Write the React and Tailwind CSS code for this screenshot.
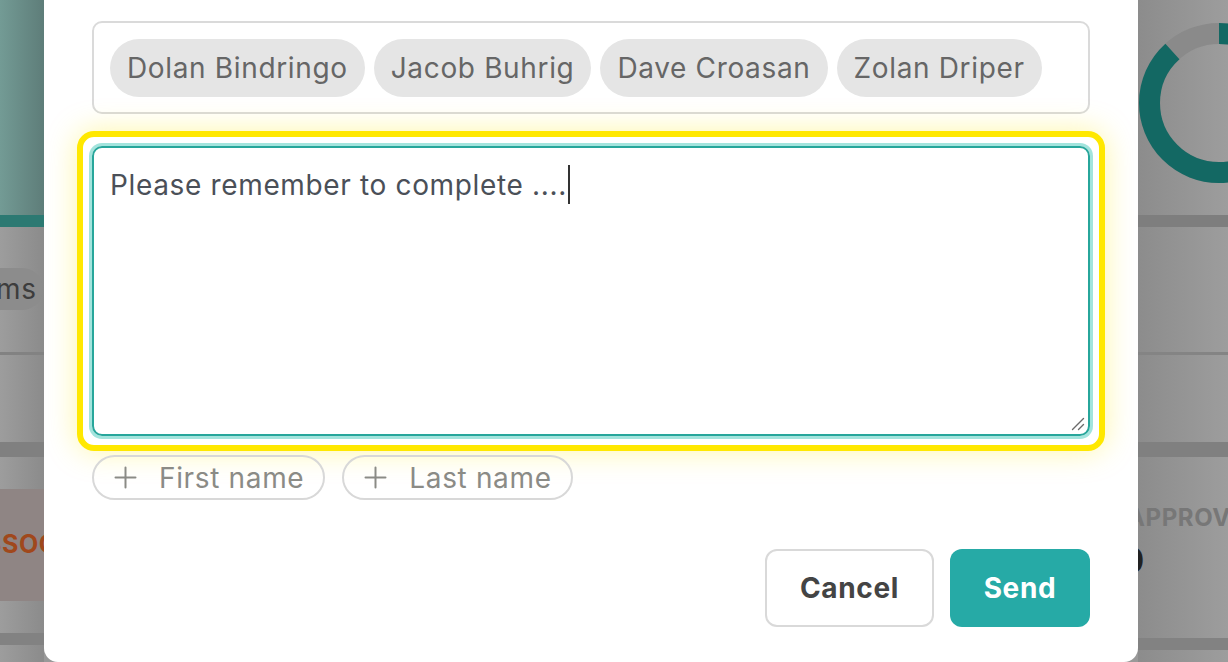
const recipients = ['Dolan Bindringo', 'Jacob Buhrig', 'Dave Croasan', 'Zolan Driper'];

// plus icon for the "add field" pills
const PlusIcon = () => (
    <svg width="23" height="23" viewBox="0 0 23 23" fill="none" stroke="#8b8b86" strokeWidth="2" strokeLinecap="round">
        <path d="M1.5 11.5h20M11.5 1.5v20" />
    </svg>
);

export default function App() {
    return (
        <div className="flex h-[662px] w-[1228px] overflow-hidden bg-[#999999] font-['Inter',sans-serif] tracking-[0.65px]">
            {/* --- dimmed dashboard, left edge --- */}
            <div className="flex w-[44px] shrink-0 flex-col overflow-hidden">
                <div className="h-[215px] bg-gradient-to-r from-[#739b95] to-[#5e7d79]" />
                <div className="h-[12px] bg-[#2c7972]" />
                <div className="flex flex-1 flex-col bg-gradient-to-r from-[#9d9d9d] to-[#8b8b8b]">
                    <div className="mt-[41px] flex h-[42px] w-[43px] items-center rounded-r-full bg-[#8c8c8c] text-[28px] text-[#3d3d3d]">
                        <span className="-ml-[4px]">ms</span>
                    </div>
                    <div className="mt-[42px] h-[3px] bg-[#828282]" />
                    <div className="mt-[87px] h-[15px] bg-[#808080]" />
                    <div className="mt-[32px] flex h-[112px] items-center bg-[#8f8584]">
                        <span className="-ml-[34px] whitespace-nowrap text-[25px] font-bold tracking-wide text-[#a0481c]">ASSOCIATES</span>
                    </div>
                    <div className="mt-[32px] h-[12px] bg-[#828282]" />
                </div>
            </div>

            {/* --- modal --- */}
            <div className="relative z-10 flex w-[1094px] shrink-0 flex-col rounded-b-[14px] bg-white px-[48px] pt-[21px] pb-[35px]">
                <div className="flex h-[93px] items-center gap-[9px] rounded-[10px] border-2 border-[#dadada] px-[16px]">
                    {recipients.map((name) => (
                        <span key={name} className="flex h-[58px] items-center rounded-full bg-[#e5e5e5] px-[17px] text-[28px] text-[#666666]">
                            {name}
                        </span>
                    ))}
                </div>

                <div className="-mx-[15px] mt-[17px] rounded-[17px] border-[6px] border-[#ffe800] p-[9px] shadow-[0_0_30px_rgba(255,232,0,0.35)]">
                    {/* message field, focused with caret at the end */}
                    <div
                        role="textbox"
                        aria-multiline="true"
                        className="relative h-[290px] w-full rounded-[10px] border-2 border-[#27a69b] px-[16px] pt-[17px] text-[28px] leading-[40px] text-[#4b5058] ring-[3px] ring-[#a3e4dd]"
                    >
                        <span>Please remember to complete ....</span>
                        <span className="ml-[1px] inline-block h-[39px] w-[2px] align-top bg-[#333333]" />
                        <svg width="14" height="14" viewBox="0 0 14 14" className="absolute right-[3px] bottom-[3px]" stroke="#6b6b6b" strokeWidth="1.4" strokeLinecap="round">
                            <path d="M1.5 12.5 12.5 1.5M7.5 12.5l5-5" />
                        </svg>
                    </div>
                </div>

                <div className="mt-[4px] flex gap-[17px]">
                    {['First name', 'Last name'].map((label) => (
                        <button key={label} type="button" className="flex h-[45px] items-center gap-[22px] rounded-full border-2 border-[#d8d8d8] pl-[20px] pr-[19px] text-[28px] text-[#8b8b86]">
                            <PlusIcon />
                            {label}
                        </button>
                    ))}
                </div>

                <div className="mt-[49px] flex justify-end gap-[16px]">
                    <button type="button" className="h-[78px] w-[169px] rounded-[12px] border-2 border-[#d9d9d9] text-[28px] font-bold text-[#444444]">
                        Cancel
                    </button>
                    <button type="button" className="h-[78px] w-[140px] rounded-[12px] bg-[#26aaa6] text-[28px] font-bold text-white">
                        Send
                    </button>
                </div>
            </div>

            {/* --- dimmed dashboard, right edge --- */}
            <div className="flex flex-1 flex-col bg-gradient-to-r from-[#8c8c8c] to-[#a4a4a4]">
                <svg width="90" height="215" viewBox="0 0 90 215" className="shrink-0">
                    <circle cx="81" cy="103" r="69.5" fill="none" stroke="#8a8a8a" strokeWidth="21" />
                    <circle
                        cx="81"
                        cy="103"
                        r="69.5"
                        fill="none"
                        stroke="#136863"
                        strokeWidth="21"
                        strokeDasharray="385 437"
                        transform="rotate(-90 81 103)"
                    />
                </svg>
                <div className="h-[12px] bg-[#7e7e7e]" />
                <div className="mt-[125px] h-[3px] bg-[#848484]" />
                <div className="mt-[87px] h-[15px] bg-[#808080]" />
                <span className="-ml-[11px] mt-[49px] whitespace-nowrap text-[24px] font-bold leading-[24px] tracking-wide text-[#777777]">APPROVED</span>
                <span className="-ml-[18px] mt-[12px] text-[36px] font-bold leading-[36px] text-[#222222]">0</span>
                <div className="mt-[60px] h-[12px] bg-[#828282]" />
            </div>
        </div>
    );
}
